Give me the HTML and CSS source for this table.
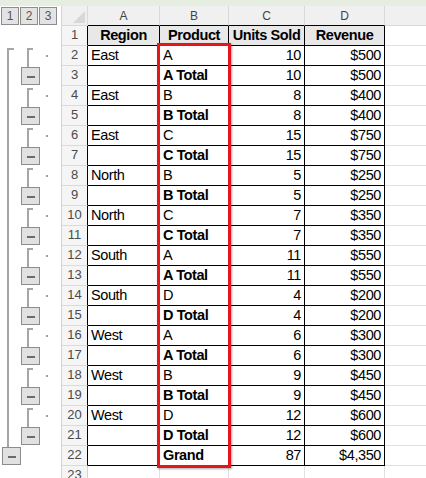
FILE: index.html
```html
<!DOCTYPE html>
<html>
<head>
<meta charset="utf-8">
<link rel="stylesheet" href="styles.css">
</head>
<body>
<div class="strip"></div>
<div class="sheet">
  <div class="outline">
    <div class="levels"><span class="lvl">1</span><span class="lvl">2</span><span class="lvl">3</span></div>
    <svg width="61" height="452" viewBox="0 0 61 452">
      <g class="line">
        <path d="M14 23H8V421"/>
        <path d="M33 23H28V41"/><path d="M33 63H28V81"/><path d="M33 103H28V121"/><path d="M33 143H28V161"/><path d="M33 183H28V201"/>
        <path d="M33 223H28V241"/><path d="M33 263H28V281"/><path d="M33 303H28V321"/><path d="M33 343H28V361"/><path d="M33 383H28V401"/>
      </g>
      <g class="btn">
        <rect x="21.5" y="41.5" width="18" height="17"/><rect x="21.5" y="81.5" width="18" height="17"/><rect x="21.5" y="121.5" width="18" height="17"/><rect x="21.5" y="161.5" width="18" height="17"/><rect x="21.5" y="201.5" width="18" height="17"/>
        <rect x="21.5" y="241.5" width="18" height="17"/><rect x="21.5" y="281.5" width="18" height="17"/><rect x="21.5" y="321.5" width="18" height="17"/><rect x="21.5" y="361.5" width="18" height="17"/><rect x="21.5" y="401.5" width="18" height="17"/>
        <rect x="2.5" y="421.5" width="18" height="17"/>
      </g>
      <g class="minus">
        <rect x="27" y="50" width="8" height="2"/><rect x="27" y="90" width="8" height="2"/><rect x="27" y="130" width="8" height="2"/><rect x="27" y="170" width="8" height="2"/><rect x="27" y="210" width="8" height="2"/>
        <rect x="27" y="250" width="8" height="2"/><rect x="27" y="290" width="8" height="2"/><rect x="27" y="330" width="8" height="2"/><rect x="27" y="370" width="8" height="2"/><rect x="27" y="410" width="8" height="2"/>
        <rect x="8" y="430" width="8" height="2"/>
      </g>
      <g class="dot">
        <rect x="46" y="29" width="2" height="2"/><rect x="46" y="69" width="2" height="2"/><rect x="46" y="109" width="2" height="2"/><rect x="46" y="149" width="2" height="2"/><rect x="46" y="189" width="2" height="2"/>
        <rect x="46" y="229" width="2" height="2"/><rect x="46" y="269" width="2" height="2"/><rect x="46" y="309" width="2" height="2"/><rect x="46" y="349" width="2" height="2"/><rect x="46" y="389" width="2" height="2"/>
      </g>
    </svg>
  </div>
  <div class="grid">
    <div class="ch corner"><span class="tri"></span></div>
    <div class="ch">A</div><div class="ch">B</div><div class="ch">C</div><div class="ch last">D</div><div class="ch e"></div>

    <div class="rh">1</div><div class="c hd">Region</div><div class="c hd">Product</div><div class="c hd">Units Sold</div><div class="c hd">Revenue</div><div class="c e"></div>
    <div class="rh">2</div><div class="c">East</div><div class="c">A</div><div class="c n">10</div><div class="c n">$500</div><div class="c e"></div>
    <div class="rh">3</div><div class="c"></div><div class="c b">A Total</div><div class="c n">10</div><div class="c n">$500</div><div class="c e"></div>
    <div class="rh">4</div><div class="c">East</div><div class="c">B</div><div class="c n">8</div><div class="c n">$400</div><div class="c e"></div>
    <div class="rh">5</div><div class="c"></div><div class="c b">B Total</div><div class="c n">8</div><div class="c n">$400</div><div class="c e"></div>
    <div class="rh">6</div><div class="c">East</div><div class="c">C</div><div class="c n">15</div><div class="c n">$750</div><div class="c e"></div>
    <div class="rh">7</div><div class="c"></div><div class="c b">C Total</div><div class="c n">15</div><div class="c n">$750</div><div class="c e"></div>
    <div class="rh">8</div><div class="c">North</div><div class="c">B</div><div class="c n">5</div><div class="c n">$250</div><div class="c e"></div>
    <div class="rh">9</div><div class="c"></div><div class="c b">B Total</div><div class="c n">5</div><div class="c n">$250</div><div class="c e"></div>
    <div class="rh">10</div><div class="c">North</div><div class="c">C</div><div class="c n">7</div><div class="c n">$350</div><div class="c e"></div>
    <div class="rh">11</div><div class="c"></div><div class="c b">C Total</div><div class="c n">7</div><div class="c n">$350</div><div class="c e"></div>
    <div class="rh">12</div><div class="c">South</div><div class="c">A</div><div class="c n">11</div><div class="c n">$550</div><div class="c e"></div>
    <div class="rh">13</div><div class="c"></div><div class="c b">A Total</div><div class="c n">11</div><div class="c n">$550</div><div class="c e"></div>
    <div class="rh">14</div><div class="c">South</div><div class="c">D</div><div class="c n">4</div><div class="c n">$200</div><div class="c e"></div>
    <div class="rh">15</div><div class="c"></div><div class="c b">D Total</div><div class="c n">4</div><div class="c n">$200</div><div class="c e"></div>
    <div class="rh">16</div><div class="c">West</div><div class="c">A</div><div class="c n">6</div><div class="c n">$300</div><div class="c e"></div>
    <div class="rh">17</div><div class="c"></div><div class="c b">A Total</div><div class="c n">6</div><div class="c n">$300</div><div class="c e"></div>
    <div class="rh">18</div><div class="c">West</div><div class="c">B</div><div class="c n">9</div><div class="c n">$450</div><div class="c e"></div>
    <div class="rh">19</div><div class="c"></div><div class="c b">B Total</div><div class="c n">9</div><div class="c n">$450</div><div class="c e"></div>
    <div class="rh">20</div><div class="c">West</div><div class="c">D</div><div class="c n">12</div><div class="c n">$600</div><div class="c e"></div>
    <div class="rh">21</div><div class="c"></div><div class="c b">D Total</div><div class="c n">12</div><div class="c n">$600</div><div class="c e"></div>
    <div class="rh">22</div><div class="c"></div><div class="c b">Grand</div><div class="c n">87</div><div class="c n">$4,350</div><div class="c e"></div>
    <div class="rh out">23</div><div class="c g"></div><div class="c g"></div><div class="c g"></div><div class="c g"></div><div class="c e"></div>

    <div class="sel"></div>
  </div>
</div>
</body>
</html>
```
FILE: styles.css
```css
html, body {
  margin: 0;
  padding: 0;
  background: #fff;
}
body {
  width: 426px;
  height: 478px;
  overflow: hidden;
  font-family: "Liberation Sans", Arial, sans-serif;
}
.strip {
  height: 6px;
  background: #e6eee2;
}
.sheet {
  display: flex;
}
.outline {
  width: 61px;
  flex: none;
}
.levels {
  height: 20px;
  box-sizing: border-box;
  padding: 1px 0 0 1px;
  display: flex;
  gap: 1px;
}
.lvl {
  width: 18px;
  height: 18px;
  box-sizing: border-box;
  border: 1px solid #8c8c8c;
  background: #e3e3e3;
  color: #555;
  font-size: 12px;
  display: flex;
  align-items: center;
  justify-content: center;
}
.outline svg {
  display: block;
}
.line path {
  fill: none;
  stroke: #a6a6a6;
  stroke-width: 2;
}
.btn rect {
  fill: #e1e1e1;
  stroke: #8c8c8c;
  stroke-width: 1;
}
.minus rect {
  fill: #6a6a6a;
}
.dot rect {
  fill: #a0a0a0;
}
.grid {
  flex: 1;
  display: grid;
  grid-template-columns: 26px 72px 69px 76px 80px 1fr;
  grid-auto-rows: 20px;
  border-left: 1px solid #d4d4d4;
  position: relative;
}
.ch {
  box-sizing: border-box;
  background: #f0f0f0;
  border-right: 1px solid #d9d9d9;
  border-bottom: 1px solid #000;
  color: #444;
  font-size: 12px;
  display: flex;
  align-items: center;
  justify-content: center;
  padding-top: 1px;
}
.ch.corner {
  border-bottom-color: #d9d9d9;
  position: relative;
}
.ch.e {
  border-bottom-color: #d9d9d9;
  border-right: none;
}
.tri {
  position: absolute;
  right: 2px;
  bottom: 2px;
  width: 0;
  height: 0;
  border-left: 12px solid transparent;
  border-bottom: 12px solid #d8d8d8;
}
.rh {
  box-sizing: border-box;
  background: #f5f5f5;
  border-right: 1px solid #000;
  border-bottom: 1px solid #dadada;
  color: #4a4a4a;
  font-size: 13px;
  display: flex;
  align-items: flex-end;
  justify-content: center;
  line-height: 16px;
  padding-bottom: 2px;
}
.rh.out {
  border-right-color: #d4d4d4;
}
.c {
  box-sizing: border-box;
  border-right: 1px solid #000;
  border-bottom: 1px solid #000;
  color: #000;
  font-size: 14.5px;
  letter-spacing: -0.4px;
  line-height: 17px;
  display: flex;
  align-items: flex-end;
  padding: 0 3px 1px;
  white-space: nowrap;
  overflow: hidden;
}
.c.hd {
  background: #e8e8e8;
  font-weight: bold;
  justify-content: center;
}
.c.b {
  font-weight: bold;
}
.c.n {
  justify-content: flex-end;
}
.c.e {
  border-right: none;
  border-bottom-color: #e1e1e1;
}
.c.g {
  border-right-color: #e1e1e1;
  border-bottom-color: #e1e1e1;
}
.sel {
  position: absolute;
  grid-column: 3 / 4;
  grid-row: 3 / 24;
  inset: -3px -2px -2px -3px;
  border: 3px solid #e8141b;
  box-shadow: 1px 1px 2px rgba(0, 0, 0, 0.35);
  z-index: 2;
}
```
